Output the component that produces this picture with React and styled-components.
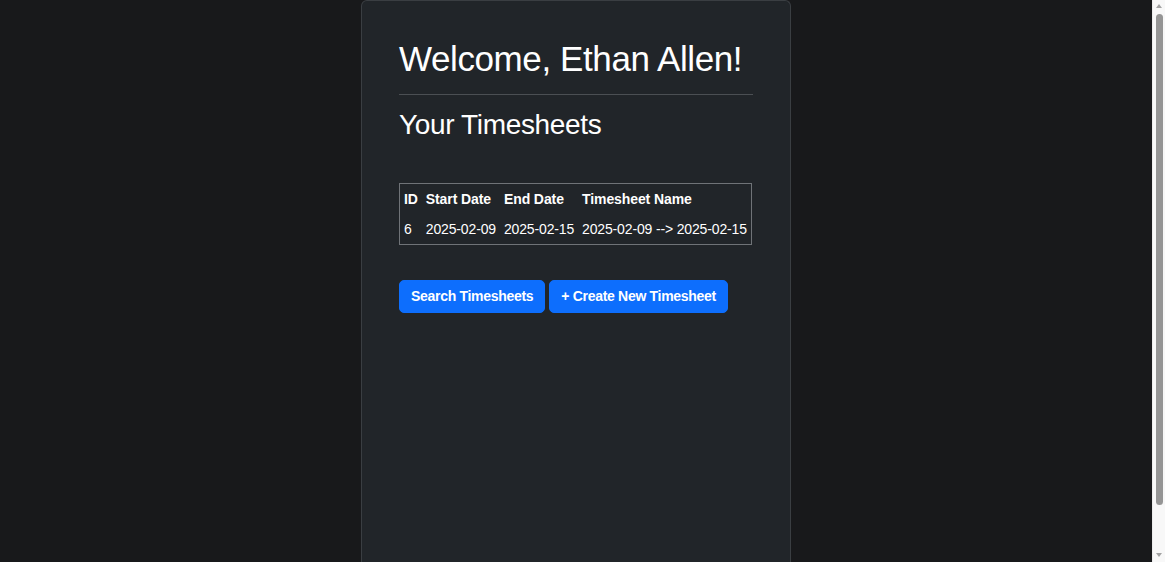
import React from "react";
import styled, { createGlobalStyle } from "styled-components";

const Global = createGlobalStyle`
  html, body {
    margin: 0;
    padding: 0;
    background: #18191b;
    font-family: "Liberation Sans", Arial, sans-serif;
    color: #ffffff;
  }
  * { box-sizing: border-box; }
`;

const Page = styled.div`
  display: flex;
  justify-content: center;
  padding-right: 13px;
`;

const Card = styled.main`
  width: 430px;
  min-height: 100vh;
  background: #212529;
  border: 1px solid #3a3e42;
  border-bottom: none;
  border-radius: 6px 6px 0 0;
  padding: 36px 37px;
`;

const Title = styled.h1`
  margin: 0;
  font-size: 35px;
  letter-spacing: -0.4px;
  font-weight: 400;
  line-height: 43px;
  white-space: nowrap;
  color: #ffffff;
`;

const Rule = styled.hr`
  margin: 14px 0 13px;
  border: 0;
  border-top: 1px solid #4b4f53;
`;

const Subtitle = styled.h2`
  margin: 0 0 41px;
  font-size: 28px;
  letter-spacing: -0.35px;
  font-weight: 400;
  line-height: 1.2;
  color: #ffffff;
`;

const Table = styled.table`
  border-collapse: collapse;
  border: 1px solid #6f7377;
  font-size: 14px;
  line-height: 16px;
  color: #ffffff;
`;

const Th = styled.th`
  text-align: left;
  font-weight: 700;
  letter-spacing: -0.1px;
  padding: 7px 4px;
  white-space: nowrap;
`;

const Td = styled.td`
  padding: 7px 4px;
  letter-spacing: -0.15px;
  white-space: nowrap;
`;

const Actions = styled.div`
  display: flex;
  gap: 4px;
  margin-top: 35px;
`;

const Button = styled.button`
  background: #0d6efd;
  color: #ffffff;
  border: 1px solid #0d6efd;
  border-radius: 5px;
  padding: 5px 11px 5px 11px;
  font-family: "Liberation Sans", Arial, sans-serif;
  font-size: 14px;
  font-weight: 700;
  letter-spacing: -0.3px;
  line-height: 21px;
  cursor: pointer;
`;

const ScrollTrack = styled.div`
  position: fixed;
  top: 0;
  right: 0;
  width: 13px;
  height: 100vh;
  background: #f8f8f8;
  border-left: 1px solid #ececec;
`;

const Arrow = styled.span`
  position: absolute;
  left: 3px;
  width: 0;
  height: 0;
  border-left: 3.5px solid transparent;
  border-right: 3.5px solid transparent;
  ${(p) =>
    p.$down
      ? `bottom: 5px; border-top: 4px solid #a3a3a3;`
      : `top: 4px; border-bottom: 4px solid #a3a3a3;`}
`;

const Thumb = styled.div`
  position: absolute;
  top: 14px;
  left: 3px;
  width: 7px;
  height: 491px;
  border-radius: 4px;
  background: #959595;
`;

const rows = [
  { id: 6, start: "2025-02-09", end: "2025-02-15", name: "2025-02-09 --> 2025-02-15" },
];

export default function App() {
  return (
    <>
      <Global />
      <Page>
        <Card>
          <Title>Welcome, Ethan Allen!</Title>
          <Rule />
          <Subtitle>Your Timesheets</Subtitle>
          <Table>
            <thead>
              <tr>
                <Th>ID</Th>
                <Th>Start Date</Th>
                <Th>End Date</Th>
                <Th>Timesheet Name</Th>
              </tr>
            </thead>
            <tbody>
              {rows.map((r) => (
                <tr key={r.id}>
                  <Td>{r.id}</Td>
                  <Td>{r.start}</Td>
                  <Td>{r.end}</Td>
                  <Td>{r.name}</Td>
                </tr>
              ))}
            </tbody>
          </Table>
          <Actions>
            <Button>Search Timesheets</Button>
            <Button>+ Create New Timesheet</Button>
          </Actions>
        </Card>
      </Page>
      <ScrollTrack aria-hidden="true">
        <Arrow />
        <Thumb />
        <Arrow $down />
      </ScrollTrack>
    </>
  );
}
